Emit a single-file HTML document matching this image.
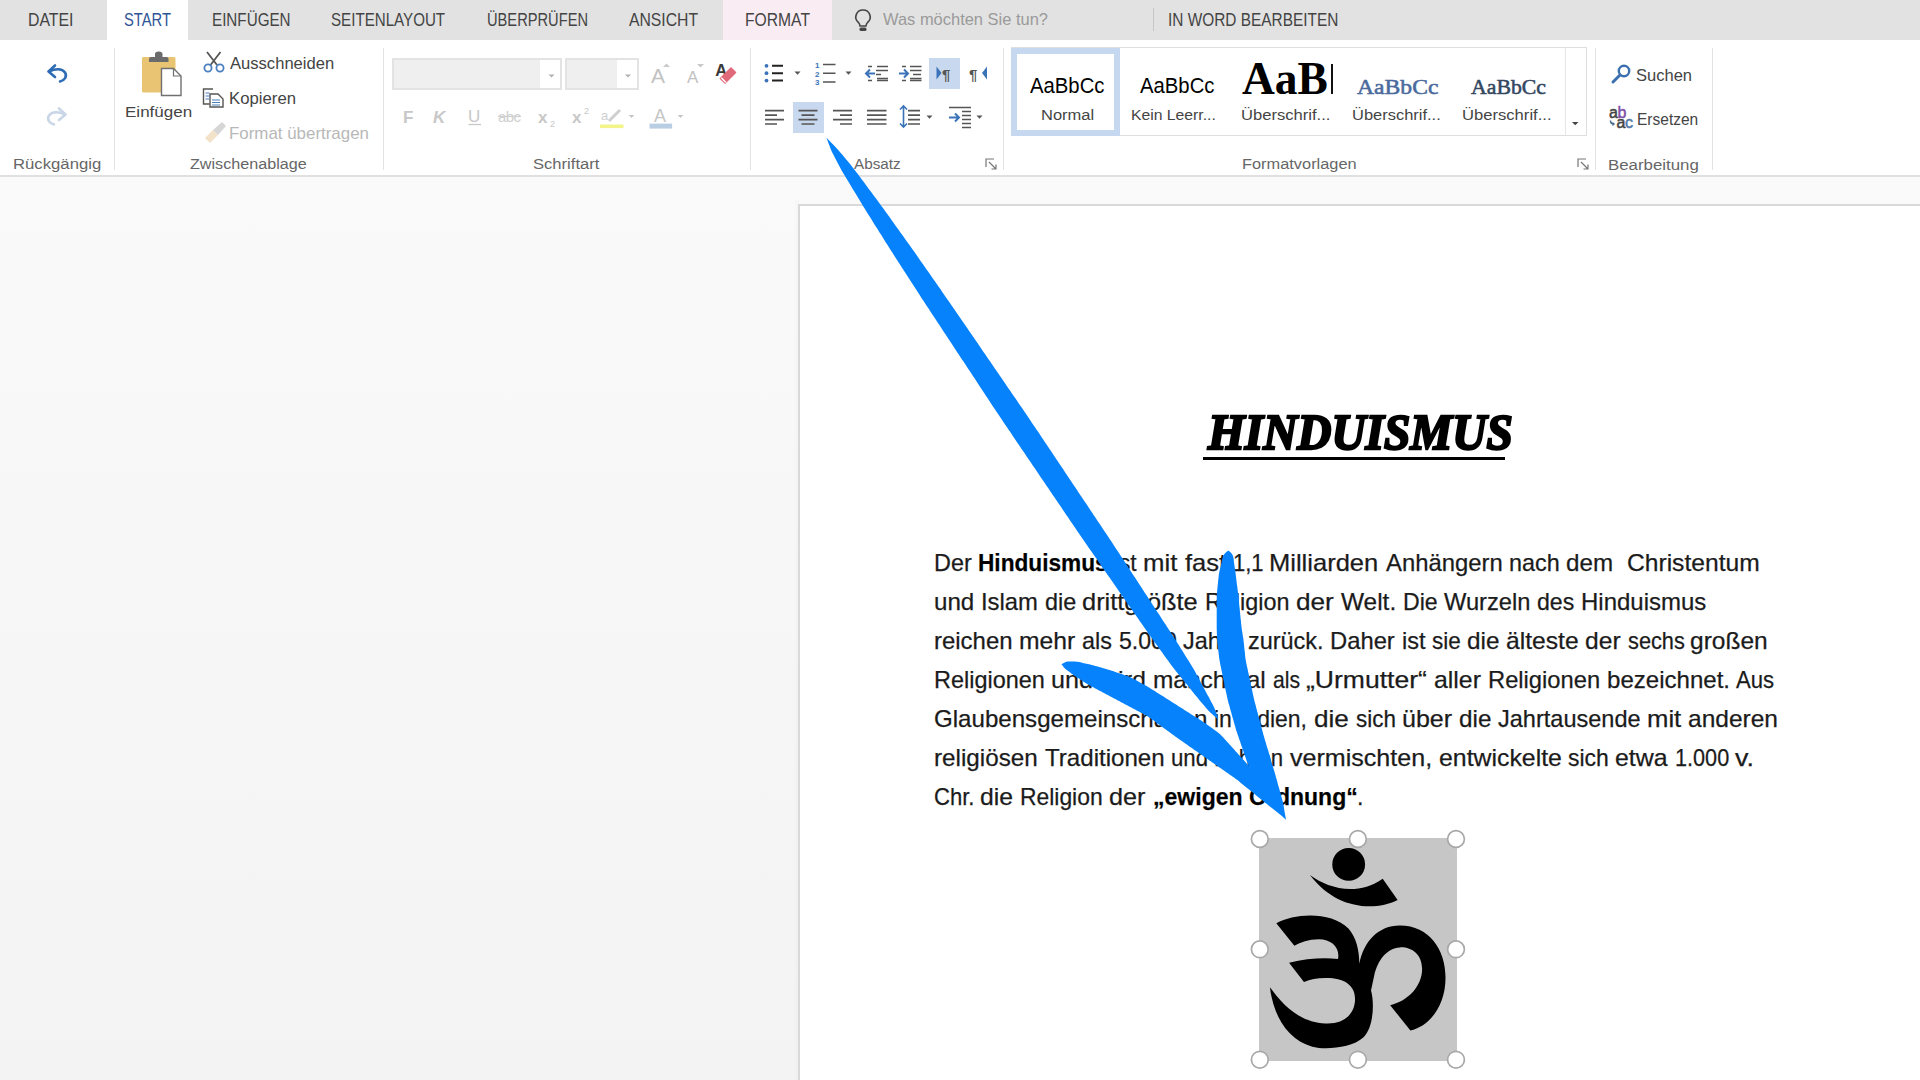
<!DOCTYPE html>
<html><head><meta charset="utf-8">
<style>
html,body{margin:0;padding:0;width:1920px;height:1080px;overflow:hidden;}
body{position:relative;font-family:"Liberation Sans",sans-serif;background:#f6f6f6;}
.tx{position:absolute;white-space:nowrap;line-height:1;transform-origin:0 0;}
.body{color:#1b1b1b;font-family:"Liberation Sans",sans-serif;font-weight:400;-webkit-text-stroke:0.25px #1b1b1b;}
.body b{font-weight:700;color:#000;}
.abs{position:absolute;}
.sep{position:absolute;top:48px;width:1px;height:122px;background:#e3e3e3;}
svg{position:absolute;left:0;top:0;overflow:visible;}
</style></head><body>
<!-- tab bar -->
<div class="abs" style="left:0;top:0;width:1920px;height:40px;background:#e2e2e2"></div>
<div class="abs" style="left:107px;top:0;width:81px;height:40px;background:#ffffff"></div>
<div class="abs" style="left:723px;top:0;width:109px;height:40px;background:#f9edf3"></div>
<div class="abs" style="left:1153px;top:8px;width:1px;height:23px;background:#c6c6c6"></div>
<!-- ribbon -->
<div class="abs" style="left:0;top:40px;width:1920px;height:135px;background:#ffffff"></div>
<div class="abs" style="left:0;top:175px;width:1920px;height:2px;background:#e0e0e0"></div>
<!-- doc area -->
<div class="abs" style="left:0;top:177px;width:1920px;height:903px;background:linear-gradient(#fafafa,#f3f3f3)"></div>
<div class="abs" style="left:793px;top:200px;width:6px;height:880px;background:linear-gradient(90deg,rgba(0,0,0,0),rgba(0,0,0,0.025))"></div>
<div class="abs" style="left:798px;top:204px;width:1130px;height:900px;background:#ffffff;border-left:2px solid #d9d9d9;border-top:2px solid #d9d9d9;box-sizing:border-box"></div>
<!-- separators -->
<div class="sep" style="left:114px"></div>
<div class="sep" style="left:383px"></div>
<div class="sep" style="left:750px"></div>
<div class="sep" style="left:1003px"></div>
<div class="sep" style="left:1595px"></div>
<div class="sep" style="left:1712px"></div>
<!-- font boxes -->
<div class="abs" style="left:392px;top:58px;width:170px;height:32px;background:#efefef;border:2px solid #e3e3e3;box-sizing:border-box"></div>
<div class="abs" style="left:540px;top:60px;width:20px;height:28px;background:#ffffff"></div>
<div class="abs" style="left:565px;top:58px;width:74px;height:32px;background:#efefef;border:2px solid #e3e3e3;box-sizing:border-box"></div>
<div class="abs" style="left:617px;top:60px;width:20px;height:28px;background:#ffffff"></div>
<!-- selected paragraph buttons -->
<div class="abs" style="left:929px;top:58px;width:31px;height:31px;background:#c8d8ef"></div>
<div class="abs" style="left:793px;top:102px;width:31px;height:31px;background:#c8d8ef"></div>
<!-- styles gallery -->
<div class="abs" style="left:1011px;top:47px;width:576px;height:89px;border:1px solid #dedede;box-sizing:border-box;background:#fff"></div>
<div class="abs" style="left:1565px;top:48px;width:1px;height:87px;background:#e6e6e6"></div>
<div class="abs" style="left:1011px;top:48px;width:109px;height:88px;border:6px solid #c6d7f0;box-sizing:border-box;background:#fff"></div>
<div class="abs" style="left:1331px;top:64px;width:2px;height:30px;background:#111"></div>
<!-- title underline -->
<div class="abs" style="left:1203px;top:457px;width:302px;height:3px;background:#000"></div>
<!-- image -->
<div class="abs" style="left:1259px;top:838px;width:198px;height:223px;background:#c6c6c6"></div>

<svg width="1920" height="1080" viewBox="0 0 1920 1080">
 <!-- undo -->
 <g fill="none" stroke="#2f6cb4" stroke-width="2.6" stroke-linecap="round" stroke-linejoin="round">
  <path d="M49 71.5 C55 68.5 62 68 65 72.5 C67.5 76.5 64.5 80.5 60 81.5"/>
  <path d="M55 65.5 L48.5 71.5 L55 77"/>
 </g>
 <g fill="none" stroke="#c9d6e6" stroke-width="2.6" stroke-linecap="round" stroke-linejoin="round">
  <path d="M65 114.5 C59 111.5 52 111 49 115.5 C46.5 119.5 49.5 123.5 54 124.5"/>
  <path d="M59 108.5 L65.5 114.5 L59 120"/>
 </g>
 <!-- paste clipboard -->
 <rect x="142" y="57" width="33.5" height="35.5" rx="1.5" fill="#e9c573"/>
 <path d="M149 62 h19.5 v-3 q0 -2 -2 -2 h-4 v-3 q0 -2.5 -3.7 -2.5 q-3.8 0 -3.8 2.5 v3 h-4 q-2 0 -2 2z" fill="#6b6b6b"/>
 <path d="M161.5 68.5 h12 l7.5 7.5 v19.5 h-19.5z" fill="#fff" stroke="#707070" stroke-width="1.4"/>
 <path d="M173.5 68.5 v7.5 h7.5" fill="none" stroke="#707070" stroke-width="1.2"/>
 <!-- scissors -->
 <g fill="none" stroke-width="1.8">
  <path d="M207 52 L217 65 M220.5 52 L210.5 65" stroke="#555"/>
  <circle cx="208" cy="68" r="3.6" stroke="#4a7fc0"/>
  <circle cx="220" cy="68" r="3.6" stroke="#4a7fc0"/>
 </g>
 <!-- copy -->
 <g fill="none" stroke="#555" stroke-width="1.4">
  <path d="M213 89 h-9.5 v15 h6"/>
  <path d="M210 94 h8 l5 5 v8 h-13z" fill="#fff"/>
 </g>
 <g stroke="#4a7fc0" stroke-width="1.2"><path d="M205.5 93h4 M205.5 96h4 M205.5 99h4 M212 100h8 M212 102.5h8 M212 105h8"/></g>
 <!-- format painter disabled -->
 <path d="M205 138 l8 -8 l5 5 l-8 8z" fill="#f2e3c8"/>
 <path d="M213 130 l9 -8 l4 4 l-8 9z" fill="#d6d6d6"/>
 <!-- dropdown arrows font boxes -->
 <path d="M548.5 74.5 h6 l-3 3z" fill="#b0b0b0"/>
 <path d="M625 74.5 h6 l-3 3z" fill="#b0b0b0"/>
 <!-- grow / shrink font -->
 <text x="651" y="83" font-family="Liberation Sans" font-size="21" fill="#c2c2c2">A</text>
 <path d="M663 67 l3.5 -3.5 l3.5 3.5z" fill="#c9c9c9"/>
 <text x="687" y="83" font-family="Liberation Sans" font-size="17" fill="#c2c2c2">A</text>
 <path d="M697 64 h7 l-3.5 3.5z" fill="#c9c9c9"/>
 <!-- clear formatting -->
 <text x="715.3" y="75.5" font-family="Liberation Sans" font-size="16.5" font-weight="700" fill="#3a3a3a">A</text>
 <path d="M720.5 78.5 L731 68 L735.5 72.5 L725 83 Z" fill="#e06a7a" stroke="#e06a7a" stroke-width="1.6" stroke-linejoin="round"/>
 <path d="M721.3 77.8 l4.6 4.6" stroke="#fff" stroke-width="1.4"/>
 <!-- row2 font -->
 <text x="403" y="123" font-family="Liberation Sans" font-size="17" font-weight="700" fill="#c8c8c8">F</text>
 <text x="433" y="123" font-family="Liberation Sans" font-size="17" font-weight="700" font-style="italic" fill="#c8c8c8">K</text>
 <text x="468" y="122" font-family="Liberation Sans" font-size="17" fill="#c8c8c8">U</text>
 <path d="M468.5 124.5 h12.5" stroke="#c8c8c8" stroke-width="1.3"/>
 <text x="498" y="122" font-family="Liberation Sans" font-size="15" fill="#cfcfcf" textLength="23">abc</text>
 <path d="M498 116.5 h23" stroke="#cfcfcf" stroke-width="1.3"/>
 <text x="538" y="123" font-family="Liberation Sans" font-size="17" font-weight="700" fill="#c8c8c8">x</text>
 <text x="550" y="127" font-family="Liberation Sans" font-size="9" fill="#c8c8c8">2</text>
 <text x="572" y="123" font-family="Liberation Sans" font-size="17" font-weight="700" fill="#c8c8c8">x</text>
 <text x="584" y="114" font-family="Liberation Sans" font-size="9" fill="#c8c8c8">2</text>
 <!-- highlighter -->
 <text x="601" y="120" font-family="Liberation Sans" font-size="13" fill="#cfcfcf">a</text>
 <path d="M609 121 l11 -11" stroke="#cfcfcf" stroke-width="3"/>
 <rect x="600" y="124.5" width="23.5" height="3.6" fill="#f3f58a"/>
 <path d="M628.5 115 h6 l-3 3z" fill="#c8c8c8"/>
 <!-- font color -->
 <text x="654" y="121.5" font-family="Liberation Sans" font-size="18" fill="#c6c6c6">A</text>
 <rect x="649.5" y="123.6" width="22.6" height="5" fill="#b9cde3"/>
 <path d="M677.5 115 h6 l-3 3z" fill="#c8c8c8"/>
 <!-- paragraph: bullets -->
 <g fill="#3b73b9"><circle cx="766.5" cy="65.8" r="1.9"/><circle cx="766.5" cy="73.2" r="1.9"/><circle cx="766.5" cy="80.6" r="1.9"/></g>
 <g stroke="#222" stroke-width="2"><path d="M772 65.8h11 M772 73.2h11 M772 80.6h11"/></g>
 <path d="M794.5 71.5 h6 l-3 3.2z" fill="#555"/>
 <!-- numbering -->
 <g fill="#3b73b9" font-family="Liberation Sans" font-size="8" font-weight="700"><text x="815" y="68">1</text><text x="815" y="76.5">2</text><text x="815" y="85">3</text></g>
 <g stroke="#555" stroke-width="1.6"><path d="M823 64.5h12.5 M823 73.2h12.5 M823 82h12.5"/></g>
 <path d="M845.5 71.5 h6 l-3 3.2z" fill="#555"/>
 <!-- decrease indent -->
 <g stroke="#555" stroke-width="1.6"><path d="M868 66.5h4 M877 66.5h11 M876 70.5h12 M876 74.5h5 M877 78.5h11 M868 80.5h4 M877 80.5h11"/></g>
 <path d="M866 73.5 h9 M870 69.5 l-4 4 l4 4" stroke="#3b73b9" stroke-width="2" fill="none"/>
 <!-- increase indent -->
 <g stroke="#555" stroke-width="1.6"><path d="M902 66.5h4 M910 66.5h11.5 M910 70.5h11.5 M913 74.5h8 M910 78.5h11.5 M902 80.5h4 M910 80.5h11.5"/></g>
 <path d="M899 73.5 h9 M904 69.5 l4 4 l-4 4" stroke="#3b73b9" stroke-width="2" fill="none"/>
 <!-- LTR -->
 <path d="M936.5 66.5 l5 6.5 l-5 6.5z" fill="#3b73b9"/>
 <text x="942" y="80" font-family="Liberation Sans" font-size="15" font-weight="700" fill="#555">¶</text>
 <!-- RTL -->
 <text x="969" y="80" font-family="Liberation Sans" font-size="15" font-weight="700" fill="#555">¶</text>
 <path d="M987 66.5 l-5 6.5 l5 6.5z" fill="#3b73b9"/>
 <!-- align buttons -->
 <g stroke="#555" stroke-width="1.7">
  <path d="M765 110.7h19 M765 115.2h12 M765 119.6h19 M765 124h12"/>
  <path d="M798.5 110.7h19 M801.5 115.2h13 M798.5 119.6h19 M801.5 124h13"/>
  <path d="M833 110.7h19 M840 115.2h12 M833 119.6h19 M840 124h12"/>
  <path d="M867 110.7h19.5 M867 115.2h19.5 M867 119.6h19.5 M867 124h19.5"/>
 </g>
 <!-- line spacing -->
 <g stroke="#555" stroke-width="1.7"><path d="M908 110.7h12 M908 115.2h12 M908 119.6h12 M908 124h12"/></g>
 <path d="M903.5 106 v21 M900 109.5 l3.5 -3.5 l3.5 3.5 M900 123.5 l3.5 3.5 l3.5 -3.5" stroke="#3b73b9" stroke-width="1.6" fill="none"/>
 <path d="M926.5 115.5 h6 l-3 3.2z" fill="#555"/>
 <!-- paragraph indent -->
 <g stroke="#555" stroke-width="1.6"><path d="M949 107.5h22 M962 111.5h9 M962 115.5h9 M962 119.5h9 M962 123.5h9 M962 127.5h9"/></g>
 <path d="M949 117.5 h10 M955 113.5 l4 4 l-4 4" stroke="#3b73b9" stroke-width="2" fill="none"/>
 <path d="M976.5 115.5 h6 l-3 3.2z" fill="#555"/>
 <!-- dialog launchers -->
 <g fill="none" stroke="#777" stroke-width="1.2">
  <path d="M986 167 v-8 h8"/><path d="M989 162 l7 7 M996 164.5 v4.5 h-4.5"/>
  <path d="M1578 167 v-8 h8"/><path d="M1581 162 l7 7 M1588 164.5 v4.5 h-4.5"/>
 </g>
 <!-- gallery dropdown -->
 <path d="M1572 122 h6.5 l-3.25 3.3z" fill="#444"/>
 <!-- search -->
 <circle cx="1624" cy="71" r="5.2" fill="none" stroke="#3b6fae" stroke-width="2.4"/>
 <path d="M1620 75 l-7 7" stroke="#3b6fae" stroke-width="3" stroke-linecap="round"/>
 <!-- replace -->
 <g font-family="Liberation Sans" font-size="16" stroke-width="0.5">
 <text x="1609" y="117.5" fill="#444" stroke="#444">a</text>
 <text x="1617.5" y="117.5" fill="#7f4fa6" stroke="#7f4fa6">b</text>
 <text x="1616.5" y="127.6" fill="#444" stroke="#444">a</text>
 <text x="1625" y="127.6" fill="#4f78a8" stroke="#4f78a8">c</text>
 </g>
 <path d="M1610.5 120.5 q0 3.5 3.5 3.5" stroke="#4a6a8e" stroke-width="1.6" fill="none"/>
 <path d="M1612.5 121.8 l2.6 2.2 l-2.6 2.2z" fill="#4a6a8e"/>
 <!-- lightbulb -->
 <path d="M863 10 a7 7 0 0 0 -4.5 12.5 q1.2 1.2 1.5 3.5 h6 q0.3 -2.3 1.5 -3.5 a7 7 0 0 0 -4.5 -12.5z" fill="none" stroke="#444" stroke-width="1.6"/>
 <rect x="859.5" y="27.5" width="7" height="3.5" rx="1.5" fill="#444"/>
 <!-- om -->
 <g transform="translate(1255 835) scale(0.21288)" fill="#000">
  <circle cx="440" cy="138" r="77"/>
  <path d="M258,188 C340,250 480,290 600,205 L670,305 C560,360 380,350 258,188 Z"/>
  <path d="M100,415 C190,365 360,360 440,440 C475,480 490,540 490,605 C510,500 580,425 680,425 C820,425 895,540 895,670 C895,800 820,900 730,918 L635,800 C720,780 785,710 785,630 C785,560 735,525 680,528 C620,530 575,590 560,660 L545,730 C560,780 560,900 510,950 C460,995 370,1005 300,1000 C180,985 90,880 70,715 C130,800 210,880 330,885 C430,890 470,830 470,770 C470,700 410,670 330,672 C290,672 260,680 230,690 L160,600 C240,580 320,575 390,582 C400,530 360,490 300,490 C250,490 215,505 185,520 Z"/>
 </g>
 <!-- handles -->
 <g fill="#fff" stroke="#a8a8a8" stroke-width="1.7">
  <circle cx="1259.8" cy="839" r="8.4"/><circle cx="1357.9" cy="839" r="8.4"/><circle cx="1456" cy="839" r="8.4"/>
  <circle cx="1259.8" cy="949.3" r="8.4"/><circle cx="1456" cy="949.3" r="8.4"/>
  <circle cx="1259.8" cy="1059.7" r="8.4"/><circle cx="1357.9" cy="1059.7" r="8.4"/><circle cx="1456" cy="1059.7" r="8.4"/>
 </g>
</svg>
<div class='tx' style='left:27.82px;top:10.76px;font-family:"Liberation Sans", sans-serif;font-size:18px;font-weight:400;font-style:normal;color:#444444;transform:scaleX(0.8796)'>DATEI</div>
<div class='tx' style='left:123.88px;top:10.76px;font-family:"Liberation Sans", sans-serif;font-size:18px;font-weight:400;font-style:normal;color:#2f5597;transform:scaleX(0.8196)'>START</div>
<div class='tx' style='left:211.95px;top:10.76px;font-family:"Liberation Sans", sans-serif;font-size:18px;font-weight:400;font-style:normal;color:#444444;transform:scaleX(0.8451)'>EINFÜGEN</div>
<div class='tx' style='left:330.66px;top:10.76px;font-family:"Liberation Sans", sans-serif;font-size:18px;font-weight:400;font-style:normal;color:#444444;transform:scaleX(0.8407)'>SEITENLAYOUT</div>
<div class='tx' style='left:486.89px;top:10.76px;font-family:"Liberation Sans", sans-serif;font-size:18px;font-weight:400;font-style:normal;color:#444444;transform:scaleX(0.8148)'>ÜBERPRÜFEN</div>
<div class='tx' style='left:629.00px;top:10.76px;font-family:"Liberation Sans", sans-serif;font-size:18px;font-weight:400;font-style:normal;color:#444444;transform:scaleX(0.8747)'>ANSICHT</div>
<div class='tx' style='left:744.53px;top:10.76px;font-family:"Liberation Sans", sans-serif;font-size:18px;font-weight:400;font-style:normal;color:#444444;transform:scaleX(0.8703)'>FORMAT</div>
<div class='tx' style='left:882.90px;top:10.91px;font-family:"Liberation Sans", sans-serif;font-size:17px;font-weight:400;font-style:normal;color:#9a9a9a;transform:scaleX(0.9682)'>Was möchten Sie tun?</div>
<div class='tx' style='left:1168.09px;top:10.76px;font-family:"Liberation Sans", sans-serif;font-size:18px;font-weight:400;font-style:normal;color:#444444;transform:scaleX(0.8556)'>IN WORD BEARBEITEN</div>
<div class='tx' style='left:12.52px;top:156.48px;font-family:"Liberation Sans", sans-serif;font-size:15.5px;font-weight:400;font-style:normal;color:#666666;transform:scaleX(1.0775)'>Rückgängig</div>
<div class='tx' style='left:190.00px;top:156.48px;font-family:"Liberation Sans", sans-serif;font-size:15.5px;font-weight:400;font-style:normal;color:#666666;transform:scaleX(1.0420)'>Zwischenablage</div>
<div class='tx' style='left:533.13px;top:156.48px;font-family:"Liberation Sans", sans-serif;font-size:15.5px;font-weight:400;font-style:normal;color:#666666;transform:scaleX(1.0705)'>Schriftart</div>
<div class='tx' style='left:854.30px;top:156.28px;font-family:"Liberation Sans", sans-serif;font-size:15.5px;font-weight:400;font-style:normal;color:#666666;transform:scaleX(0.9851)'>Absatz</div>
<div class='tx' style='left:1241.64px;top:156.28px;font-family:"Liberation Sans", sans-serif;font-size:15.5px;font-weight:400;font-style:normal;color:#666666;transform:scaleX(1.0561)'>Formatvorlagen</div>
<div class='tx' style='left:1608.41px;top:156.58px;font-family:"Liberation Sans", sans-serif;font-size:15.5px;font-weight:400;font-style:normal;color:#666666;transform:scaleX(1.0866)'>Bearbeitung</div>
<div class='tx' style='left:124.60px;top:103.98px;font-family:"Liberation Sans", sans-serif;font-size:15.5px;font-weight:400;font-style:normal;color:#444444;transform:scaleX(1.0983)'>Einfügen</div>
<div class='tx' style='left:230.20px;top:55.21px;font-family:"Liberation Sans", sans-serif;font-size:17px;font-weight:400;font-style:normal;color:#444444;transform:scaleX(0.9755)'>Ausschneiden</div>
<div class='tx' style='left:229.22px;top:89.81px;font-family:"Liberation Sans", sans-serif;font-size:17px;font-weight:400;font-style:normal;color:#444444;transform:scaleX(0.9848)'>Kopieren</div>
<div class='tx' style='left:229.41px;top:124.81px;font-family:"Liberation Sans", sans-serif;font-size:17px;font-weight:400;font-style:normal;color:#b8b8b8;transform:scaleX(0.9942)'>Format übertragen</div>
<div class='tx' style='left:1030.00px;top:76.00px;font-family:"Liberation Sans", sans-serif;font-size:21.5px;font-weight:400;font-style:normal;color:#000000;transform:scaleX(0.9436)'>AaBbCc</div>
<div class='tx' style='left:1040.64px;top:106.78px;font-family:"Liberation Sans", sans-serif;font-size:15.5px;font-weight:400;font-style:normal;color:#444444;transform:scaleX(1.0646)'>Normal</div>
<div class='tx' style='left:1140.10px;top:76.00px;font-family:"Liberation Sans", sans-serif;font-size:21.5px;font-weight:400;font-style:normal;color:#000000;transform:scaleX(0.9436)'>AaBbCc</div>
<div class='tx' style='left:1130.99px;top:106.78px;font-family:"Liberation Sans", sans-serif;font-size:15.5px;font-weight:400;font-style:normal;color:#444444;transform:scaleX(1.0148)'>Kein Leerr...</div>
<div class='abs' style='left:0;top:0;width:1333px;height:200px;overflow:hidden'><div class='tx' style='left:1242.30px;top:55.68px;font-family:"Liberation Serif", serif;font-size:46px;font-weight:700;font-style:normal;color:#000000;transform:scaleX(0.9884)'>AaB</div></div>
<div class='tx' style='left:1241.23px;top:106.78px;font-family:"Liberation Sans", sans-serif;font-size:15.5px;font-weight:400;font-style:normal;color:#444444;transform:scaleX(1.0704)'>Überschrif...</div>
<div class='tx' style='left:1357.40px;top:75.78px;font-family:"Liberation Serif", serif;font-size:22px;font-weight:400;font-style:normal;color:#4a6a9c;-webkit-text-stroke:0.55px #4a6a9c;transform:scaleX(1.0747)'>AaBbCc</div>
<div class='tx' style='left:1352.34px;top:106.78px;font-family:"Liberation Sans", sans-serif;font-size:15.5px;font-weight:400;font-style:normal;color:#444444;transform:scaleX(1.0617)'>Überschrif...</div>
<div class='tx' style='left:1471.30px;top:76.08px;font-family:"Liberation Serif", serif;font-size:22px;font-weight:400;font-style:normal;color:#34475f;-webkit-text-stroke:0.55px #34475f;transform:scaleX(0.9893)'>AaBbCc</div>
<div class='tx' style='left:1462.33px;top:107.08px;font-family:"Liberation Sans", sans-serif;font-size:15.5px;font-weight:400;font-style:normal;color:#444444;transform:scaleX(1.0716)'>Überschrif...</div>
<div class='tx' style='left:1636.23px;top:67.01px;font-family:"Liberation Sans", sans-serif;font-size:17px;font-weight:400;font-style:normal;color:#444444;transform:scaleX(0.9714)'>Suchen</div>
<div class='tx' style='left:1636.79px;top:110.81px;font-family:"Liberation Sans", sans-serif;font-size:17px;font-weight:400;font-style:normal;color:#444444;transform:scaleX(0.9123)'>Ersetzen</div>
<div class='tx' style='left:1207.50px;top:407.41px;font-family:"Liberation Serif", serif;font-size:50.5px;font-weight:700;font-style:italic;color:#000000;-webkit-text-stroke:2.4px #000;transform:scaleX(0.9359)'>HINDUISMUS</div>
<div class='tx body' style='left:934.03px;top:550.68px;font-size:24px;transform:scaleX(0.9749)'>Der</div>
<div class='tx body' style='left:978.26px;top:550.68px;font-size:24px;font-weight:700;color:#000;transform:scaleX(0.9440)'>Hinduismus</div>
<div class='tx body' style='left:1114.21px;top:550.68px;font-size:24px;transform:scaleX(0.9440)'>ist</div>
<div class='tx body' style='left:1143.03px;top:550.68px;font-size:24px;transform:scaleX(1.0728)'>mit</div>
<div class='tx body' style='left:1184.50px;top:550.68px;font-size:24px;transform:scaleX(1.0636)'>fast</div>
<div class='tx body' style='left:1232.88px;top:550.68px;font-size:24px;transform:scaleX(0.9168)'>1,1</div>
<div class='tx body' style='left:1269.44px;top:550.68px;font-size:24px;transform:scaleX(1.0639)'>Milliarden</div>
<div class='tx body' style='left:1385.80px;top:550.68px;font-size:24px;transform:scaleX(0.9936)'>Anhängern</div>
<div class='tx body' style='left:1509.13px;top:550.68px;font-size:24px;transform:scaleX(0.9726)'>nach</div>
<div class='tx body' style='left:1566.19px;top:550.68px;font-size:24px;transform:scaleX(1.0079)'>dem </div>
<div class='tx body' style='left:1626.67px;top:550.68px;font-size:24px;transform:scaleX(1.0253)'>Christentum</div>
<div class='tx body' style='left:933.99px;top:589.58px;font-size:24px;transform:scaleX(1.0061)'>und</div>
<div class='tx body' style='left:981.01px;top:589.58px;font-size:24px;transform:scaleX(0.9935)'>Islam</div>
<div class='tx body' style='left:1044.63px;top:589.58px;font-size:24px;transform:scaleX(0.9743)'>die</div>
<div class='tx body' style='left:1082.24px;top:589.58px;font-size:24px;transform:scaleX(1.0583)'>drittgrößte</div>
<div class='tx body' style='left:1205.13px;top:589.58px;font-size:24px;transform:scaleX(0.9734)'>Religion</div>
<div class='tx body' style='left:1295.91px;top:589.58px;font-size:24px;transform:scaleX(1.0903)'>der</div>
<div class='tx body' style='left:1341.00px;top:589.58px;font-size:24px;transform:scaleX(1.0177)'>Welt.</div>
<div class='tx body' style='left:1403.04px;top:589.58px;font-size:24px;transform:scaleX(0.9621)'>Die</div>
<div class='tx body' style='left:1444.10px;top:589.58px;font-size:24px;transform:scaleX(0.9868)'>Wurzeln</div>
<div class='tx body' style='left:1537.14px;top:589.58px;font-size:24px;transform:scaleX(0.9633)'>des</div>
<div class='tx body' style='left:1580.80px;top:589.58px;font-size:24px;transform:scaleX(0.9994)'>Hinduismus</div>
<div class='tx body' style='left:934.00px;top:628.58px;font-size:24px;transform:scaleX(0.9979)'>reichen</div>
<div class='tx body' style='left:1019.17px;top:628.58px;font-size:24px;transform:scaleX(1.0286)'>mehr</div>
<div class='tx body' style='left:1082.33px;top:628.58px;font-size:24px;transform:scaleX(0.9739)'>als</div>
<div class='tx body' style='left:1118.70px;top:628.58px;font-size:24px;transform:scaleX(0.9621)'>5.000</div>
<div class='tx body' style='left:1182.90px;top:628.58px;font-size:24px;transform:scaleX(0.9790)'>Jahre</div>
<div class='tx body' style='left:1248.20px;top:628.58px;font-size:24px;transform:scaleX(0.9762)'>zurück.</div>
<div class='tx body' style='left:1330.21px;top:628.58px;font-size:24px;transform:scaleX(0.9912)'>Daher</div>
<div class='tx body' style='left:1401.62px;top:628.58px;font-size:24px;transform:scaleX(0.9809)'>ist</div>
<div class='tx body' style='left:1431.70px;top:628.58px;font-size:24px;transform:scaleX(0.9362)'>sie</div>
<div class='tx body' style='left:1466.59px;top:628.58px;font-size:24px;transform:scaleX(1.0130)'>die</div>
<div class='tx body' style='left:1505.77px;top:628.58px;font-size:24px;transform:scaleX(1.0274)'>älteste</div>
<div class='tx body' style='left:1585.27px;top:628.58px;font-size:24px;transform:scaleX(1.0259)'>der</div>
<div class='tx body' style='left:1627.70px;top:628.58px;font-size:24px;transform:scaleX(0.9067)'>sechs</div>
<div class='tx body' style='left:1690.48px;top:628.58px;font-size:24px;transform:scaleX(1.0218)'>großen</div>
<div class='tx body' style='left:934.02px;top:667.68px;font-size:24px;transform:scaleX(0.9768)'>Religionen</div>
<div class='tx body' style='left:1051.25px;top:667.68px;font-size:24px;transform:scaleX(1.0454)'>und</div>
<div class='tx body' style='left:1100.08px;top:667.68px;font-size:24px;transform:scaleX(1.0454)'>wird</div>
<div class='tx body' style='left:1153.08px;top:667.68px;font-size:24px;transform:scaleX(1.0181)'>manchmal</div>
<div class='tx body' style='left:1272.72px;top:667.68px;font-size:24px;transform:scaleX(0.8831)'>als</div>
<div class='tx body' style='left:1305.70px;top:667.68px;font-size:24px;transform:scaleX(1.1061)'>„Urmutter“</div>
<div class='tx body' style='left:1434.07px;top:667.68px;font-size:24px;transform:scaleX(1.0342)'>aller</div>
<div class='tx body' style='left:1487.91px;top:667.68px;font-size:24px;transform:scaleX(0.9885)'>Religionen</div>
<div class='tx body' style='left:1606.60px;top:667.68px;font-size:24px;transform:scaleX(1.0022)'>bezeichnet.</div>
<div class='tx body' style='left:1736.30px;top:667.68px;font-size:24px;transform:scaleX(0.9213)'>Aus</div>
<div class='tx body' style='left:934.00px;top:706.78px;font-size:24px;transform:scaleX(1.0041)'>Glaubensgemeinschaften</div>
<div class='tx body' style='left:1214.04px;top:706.78px;font-size:24px;transform:scaleX(0.9570)'>in</div>
<div class='tx body' style='left:1238.30px;top:706.78px;font-size:24px;transform:scaleX(0.9570)'>Indien,</div>
<div class='tx body' style='left:1313.51px;top:706.78px;font-size:24px;transform:scaleX(1.0877)'>die</div>
<div class='tx body' style='left:1355.60px;top:706.78px;font-size:24px;transform:scaleX(0.9335)'>sich</div>
<div class='tx body' style='left:1401.56px;top:706.78px;font-size:24px;transform:scaleX(1.0438)'>über</div>
<div class='tx body' style='left:1458.69px;top:706.78px;font-size:24px;transform:scaleX(1.0107)'>die</div>
<div class='tx body' style='left:1497.80px;top:706.78px;font-size:24px;transform:scaleX(0.9803)'>Jahrtausende</div>
<div class='tx body' style='left:1646.83px;top:706.78px;font-size:24px;transform:scaleX(1.0709)'>mit</div>
<div class='tx body' style='left:1688.28px;top:706.78px;font-size:24px;transform:scaleX(1.0218)'>anderen</div>
<div class='tx body' style='left:933.99px;top:745.88px;font-size:24px;transform:scaleX(1.0102)'>religiösen</div>
<div class='tx body' style='left:1044.50px;top:745.88px;font-size:24px;transform:scaleX(1.0036)'>Traditionen</div>
<div class='tx body' style='left:1170.87px;top:745.88px;font-size:24px;transform:scaleX(0.9260)'>und</div>
<div class='tx body' style='left:1214.13px;top:745.88px;font-size:24px;transform:scaleX(0.9260)'>Lehren</div>
<div class='tx body' style='left:1289.50px;top:745.88px;font-size:24px;transform:scaleX(1.0445)'>vermischten,</div>
<div class='tx body' style='left:1438.56px;top:745.88px;font-size:24px;transform:scaleX(1.0354)'>entwickelte</div>
<div class='tx body' style='left:1568.40px;top:745.88px;font-size:24px;transform:scaleX(0.9554)'>sich</div>
<div class='tx body' style='left:1615.46px;top:745.88px;font-size:24px;transform:scaleX(1.0355)'>etwa</div>
<div class='tx body' style='left:1675.00px;top:745.88px;font-size:24px;transform:scaleX(0.9022)'>1.000</div>
<div class='tx body' style='left:1735.20px;top:745.88px;font-size:24px;transform:scaleX(1.1200)'>v.</div>
<div class='tx body' style='left:933.68px;top:785.18px;font-size:24px;transform:scaleX(0.9194)'>Chr.</div>
<div class='tx body' style='left:980.17px;top:785.18px;font-size:24px;transform:scaleX(1.0311)'>die</div>
<div class='tx body' style='left:1020.15px;top:785.18px;font-size:24px;transform:scaleX(0.9530)'>Religion</div>
<div class='tx body' style='left:1109.05px;top:785.18px;font-size:24px;transform:scaleX(1.0494)'>der</div>
<div class='tx body' style='left:1152.54px;top:785.18px;font-size:24px;font-weight:700;color:#000;transform:scaleX(0.9598)'>„ewigen</div>
<div class='tx body' style='left:1248.54px;top:785.18px;font-size:24px;font-weight:700;color:#000;transform:scaleX(0.9598)'>Ordnung“</div>
<div class='tx body' style='left:1357.30px;top:785.18px;font-size:24px;transform:scaleX(0.9598)'>.</div>
<svg width="1920" height="1080" viewBox="0 0 1920 1080">
 <g fill="#0582fc">
<path d='M826.5,137.8 L827.4,140.2 L828.3,142.7 L829.2,145.1 L830.1,147.5 L831.1,150.0 L832.2,152.4 L833.5,154.8 L834.7,157.3 L836.0,159.7 L837.2,162.1 L838.5,164.6 L839.8,167.0 L841.1,169.4 L842.5,171.9 L843.9,174.3 L845.4,176.7 L846.9,179.2 L848.3,181.6 L849.8,184.0 L851.3,186.5 L852.7,188.9 L854.2,191.3 L855.7,193.8 L857.2,196.2 L858.6,198.6 L860.1,201.0 L861.6,203.5 L863.0,205.9 L864.5,208.3 L866.0,210.8 L867.5,213.2 L869.0,215.6 L870.6,218.1 L872.1,220.5 L873.6,222.9 L875.1,225.4 L876.7,227.8 L878.2,230.2 L879.7,232.7 L881.3,235.1 L882.8,237.5 L884.3,240.0 L885.8,242.4 L887.4,244.8 L888.9,247.3 L890.4,249.7 L892.0,252.1 L893.5,254.6 L895.1,257.0 L896.7,259.4 L898.3,261.9 L899.8,264.3 L901.4,266.7 L903.0,269.2 L904.5,271.6 L906.1,274.0 L907.7,276.5 L909.3,278.9 L910.8,281.3 L912.4,283.8 L914.0,286.2 L915.5,288.6 L917.1,291.1 L918.7,293.5 L920.3,295.9 L921.8,298.4 L923.4,300.8 L925.0,303.2 L926.6,305.7 L928.2,308.1 L929.8,310.5 L931.4,312.9 L933.0,315.4 L934.6,317.8 L936.2,320.2 L937.8,322.7 L939.4,325.1 L941.0,327.5 L942.6,330.0 L944.2,332.4 L945.8,334.8 L947.4,337.3 L949.0,339.7 L950.6,342.1 L952.2,344.6 L953.8,347.0 L955.4,349.4 L957.0,351.9 L958.6,354.3 L960.2,356.7 L961.8,359.2 L963.5,361.6 L965.1,364.0 L966.7,366.5 L968.3,368.9 L969.9,371.3 L971.5,373.8 L973.1,376.2 L974.7,378.6 L976.3,381.1 L977.9,383.5 L979.5,385.9 L981.1,388.4 L982.7,390.8 L984.3,393.2 L985.9,395.7 L987.5,398.1 L989.1,400.5 L990.7,403.0 L992.3,405.4 L993.9,407.8 L995.5,410.3 L997.2,412.7 L998.8,415.1 L1000.4,417.6 L1002.1,420.0 L1003.7,422.4 L1005.4,424.9 L1007.0,427.3 L1008.6,429.7 L1010.3,432.1 L1011.9,434.6 L1013.5,437.0 L1015.2,439.4 L1016.8,441.9 L1018.5,444.3 L1020.1,446.7 L1021.8,449.2 L1023.4,451.6 L1025.1,454.0 L1026.7,456.5 L1028.4,458.9 L1030.0,461.3 L1031.7,463.8 L1033.3,466.2 L1035.0,468.6 L1036.6,471.1 L1038.3,473.5 L1039.9,475.9 L1041.6,478.4 L1043.2,480.8 L1044.9,483.2 L1046.5,485.7 L1048.2,488.1 L1049.8,490.5 L1051.5,493.0 L1053.1,495.4 L1054.8,497.8 L1056.4,500.3 L1058.1,502.7 L1059.7,505.1 L1061.4,507.6 L1063.0,510.0 L1064.7,512.4 L1066.3,514.9 L1068.0,517.3 L1069.6,519.7 L1071.3,522.2 L1072.9,524.6 L1074.6,527.0 L1076.2,529.5 L1077.9,531.9 L1079.5,534.3 L1081.2,536.8 L1082.9,539.2 L1084.5,541.6 L1086.2,544.1 L1087.9,546.5 L1089.6,548.9 L1091.3,551.3 L1093.0,553.8 L1094.7,556.2 L1096.4,558.6 L1098.0,561.1 L1099.7,563.5 L1101.4,565.9 L1103.1,568.4 L1104.8,570.8 L1106.5,573.2 L1108.2,575.7 L1109.9,578.1 L1111.6,580.5 L1113.3,583.0 L1115.0,585.4 L1116.6,587.8 L1118.3,590.3 L1120.0,592.7 L1121.7,595.1 L1123.4,597.6 L1125.1,600.0 L1126.8,602.4 L1128.5,604.9 L1130.2,607.3 L1131.9,609.7 L1133.6,612.2 L1135.3,614.6 L1137.0,617.0 L1138.7,619.5 L1140.4,621.9 L1142.1,624.3 L1143.8,626.8 L1145.5,629.2 L1147.2,631.6 L1148.9,634.1 L1150.6,636.5 L1152.3,638.9 L1154.1,641.4 L1155.8,643.8 L1157.6,646.2 L1159.4,648.7 L1161.1,651.1 L1162.9,653.5 L1164.6,656.0 L1166.4,658.4 L1168.2,660.8 L1169.9,663.2 L1171.7,665.7 L1173.5,668.1 L1175.4,670.5 L1177.4,673.0 L1179.3,675.4 L1181.3,677.8 L1183.3,680.3 L1185.3,682.7 L1187.3,685.1 L1189.3,687.6 L1191.2,690.0 L1193.2,692.4 L1195.2,694.9 L1197.2,697.3 L1199.1,699.7 L1201.2,702.2 L1203.2,704.6 L1205.3,707.0 L1207.4,709.5 L1209.8,711.9 L1212.3,714.3 L1215.0,716.8 L1217.8,719.2 L1217.8,719.2 L1217.3,716.8 L1216.7,714.3 L1216.0,711.9 L1215.0,709.5 L1213.9,707.0 L1212.7,704.6 L1211.4,702.2 L1210.1,699.7 L1208.9,697.3 L1207.5,694.9 L1206.2,692.4 L1204.9,690.0 L1203.6,687.6 L1202.3,685.1 L1201.0,682.7 L1199.7,680.3 L1198.4,677.8 L1197.1,675.4 L1195.8,673.0 L1194.5,670.5 L1193.0,668.1 L1191.6,665.7 L1190.1,663.2 L1188.6,660.8 L1187.1,658.4 L1185.5,656.0 L1184.0,653.5 L1182.5,651.1 L1181.0,648.7 L1179.5,646.2 L1177.9,643.8 L1176.4,641.4 L1174.9,638.9 L1173.3,636.5 L1171.7,634.1 L1170.1,631.6 L1168.6,629.2 L1167.0,626.8 L1165.4,624.3 L1163.8,621.9 L1162.2,619.5 L1160.7,617.0 L1159.1,614.6 L1157.5,612.2 L1155.9,609.7 L1154.3,607.3 L1152.8,604.9 L1151.2,602.4 L1149.6,600.0 L1148.0,597.6 L1146.4,595.1 L1144.8,592.7 L1143.2,590.3 L1141.6,587.8 L1140.1,585.4 L1138.5,583.0 L1136.9,580.5 L1135.3,578.1 L1133.7,575.7 L1132.1,573.2 L1130.5,570.8 L1128.9,568.4 L1127.3,565.9 L1125.8,563.5 L1124.2,561.1 L1122.6,558.6 L1121.0,556.2 L1119.4,553.8 L1117.8,551.3 L1116.2,548.9 L1114.6,546.5 L1113.0,544.1 L1111.4,541.6 L1109.8,539.2 L1108.2,536.8 L1106.6,534.3 L1105.0,531.9 L1103.3,529.5 L1101.7,527.0 L1100.1,524.6 L1098.5,522.2 L1096.8,519.7 L1095.2,517.3 L1093.6,514.9 L1092.0,512.4 L1090.3,510.0 L1088.7,507.6 L1087.1,505.1 L1085.5,502.7 L1083.8,500.3 L1082.2,497.8 L1080.6,495.4 L1078.9,493.0 L1077.3,490.5 L1075.7,488.1 L1074.1,485.7 L1072.4,483.2 L1070.8,480.8 L1069.2,478.4 L1067.6,475.9 L1065.9,473.5 L1064.3,471.1 L1062.7,468.6 L1061.1,466.2 L1059.4,463.8 L1057.8,461.3 L1056.2,458.9 L1054.6,456.5 L1052.9,454.0 L1051.3,451.6 L1049.7,449.2 L1048.1,446.7 L1046.4,444.3 L1044.8,441.9 L1043.2,439.4 L1041.5,437.0 L1039.9,434.6 L1038.3,432.1 L1036.6,429.7 L1035.0,427.3 L1033.4,424.9 L1031.7,422.4 L1030.1,420.0 L1028.4,417.6 L1026.8,415.1 L1025.2,412.7 L1023.5,410.3 L1021.9,407.8 L1020.2,405.4 L1018.5,403.0 L1016.9,400.5 L1015.2,398.1 L1013.5,395.7 L1011.8,393.2 L1010.2,390.8 L1008.5,388.4 L1006.8,385.9 L1005.2,383.5 L1003.5,381.1 L1001.8,378.6 L1000.2,376.2 L998.5,373.8 L996.8,371.3 L995.2,368.9 L993.5,366.5 L991.8,364.0 L990.2,361.6 L988.5,359.2 L986.8,356.7 L985.2,354.3 L983.5,351.9 L981.8,349.4 L980.2,347.0 L978.5,344.6 L976.8,342.1 L975.2,339.7 L973.5,337.3 L971.8,334.8 L970.2,332.4 L968.5,330.0 L966.8,327.5 L965.1,325.1 L963.5,322.7 L961.8,320.2 L960.1,317.8 L958.5,315.4 L956.8,312.9 L955.1,310.5 L953.4,308.1 L951.8,305.7 L950.1,303.2 L948.4,300.8 L946.7,298.4 L945.0,295.9 L943.3,293.5 L941.6,291.1 L940.0,288.6 L938.3,286.2 L936.6,283.8 L934.9,281.3 L933.2,278.9 L931.5,276.5 L929.8,274.0 L928.1,271.6 L926.4,269.2 L924.7,266.7 L923.0,264.3 L921.3,261.9 L919.6,259.4 L917.9,257.0 L916.2,254.6 L914.5,252.1 L912.8,249.7 L911.0,247.3 L909.3,244.8 L907.6,242.4 L905.8,240.0 L904.1,237.5 L902.3,235.1 L900.6,232.7 L898.9,230.2 L897.1,227.8 L895.4,225.4 L893.7,222.9 L891.9,220.5 L890.2,218.1 L888.4,215.6 L886.7,213.2 L884.9,210.8 L883.2,208.3 L881.4,205.9 L879.6,203.5 L877.8,201.0 L876.0,198.6 L874.2,196.2 L872.4,193.8 L870.6,191.3 L868.8,188.9 L867.0,186.5 L865.2,184.0 L863.4,181.6 L861.6,179.2 L859.8,176.7 L858.0,174.3 L856.2,171.9 L854.3,169.4 L852.3,167.0 L850.4,164.6 L848.4,162.1 L846.4,159.7 L844.4,157.3 L842.4,154.8 L840.3,152.4 L838.2,150.0 L835.9,147.5 L833.6,145.1 L831.3,142.7 L828.9,140.2 L826.5,137.8Z'/>
<path d='M1228.3,550.6 L1226.1,552.3 L1224.4,554.0 L1223.3,555.7 L1222.7,557.4 L1222.2,559.1 L1221.9,560.8 L1221.6,562.4 L1221.2,564.1 L1220.8,565.8 L1220.4,567.5 L1219.9,569.2 L1219.5,570.9 L1219.2,572.6 L1218.9,574.3 L1218.7,576.0 L1218.5,577.7 L1218.3,579.4 L1218.1,581.1 L1218.0,582.8 L1217.8,584.4 L1217.6,586.1 L1217.5,587.8 L1217.3,589.5 L1217.1,591.2 L1217.0,592.9 L1216.8,594.6 L1216.8,596.3 L1216.7,598.0 L1216.7,599.7 L1216.7,601.4 L1216.7,603.1 L1216.7,604.8 L1216.7,606.5 L1216.7,608.1 L1216.7,609.8 L1216.7,611.5 L1216.7,613.2 L1216.7,614.9 L1216.7,616.6 L1216.7,618.3 L1216.7,620.0 L1216.7,621.7 L1216.7,623.4 L1216.7,625.1 L1216.7,626.8 L1216.7,628.5 L1216.8,630.1 L1216.8,631.8 L1216.9,633.5 L1216.9,635.2 L1217.0,636.9 L1217.1,638.6 L1217.2,640.3 L1217.3,642.0 L1217.5,643.7 L1217.7,645.4 L1217.9,647.1 L1218.1,648.8 L1218.3,650.5 L1218.5,652.1 L1218.7,653.8 L1218.9,655.5 L1219.1,657.2 L1219.3,658.9 L1219.6,660.6 L1219.9,662.3 L1220.2,664.0 L1220.6,665.7 L1220.9,667.4 L1221.3,669.1 L1221.6,670.8 L1222.0,672.5 L1222.3,674.1 L1222.7,675.8 L1223.0,677.5 L1223.4,679.2 L1223.7,680.9 L1224.1,682.6 L1224.4,684.3 L1224.8,686.0 L1225.1,687.7 L1225.5,689.4 L1225.8,691.1 L1226.2,692.8 L1226.6,694.5 L1226.9,696.2 L1227.3,697.8 L1227.6,699.5 L1228.1,701.2 L1228.5,702.9 L1229.0,704.6 L1229.5,706.3 L1229.9,708.0 L1230.4,709.7 L1230.9,711.4 L1231.4,713.1 L1231.8,714.8 L1232.3,716.5 L1232.8,718.2 L1233.3,719.8 L1233.7,721.5 L1234.2,723.2 L1234.7,724.9 L1235.2,726.6 L1235.6,728.3 L1236.1,730.0 L1236.7,731.7 L1237.3,733.4 L1237.8,735.1 L1238.4,736.8 L1239.0,738.5 L1239.6,740.2 L1240.2,741.8 L1240.7,743.5 L1241.3,745.2 L1241.9,746.9 L1242.5,748.6 L1243.1,750.3 L1243.6,752.0 L1244.2,753.7 L1244.8,755.4 L1245.4,757.1 L1246.0,758.8 L1246.5,760.5 L1247.1,762.2 L1247.8,763.8 L1248.5,765.5 L1249.4,767.2 L1250.3,768.9 L1251.3,770.6 L1252.3,772.3 L1253.2,774.0 L1254.2,775.7 L1255.1,777.4 L1256.1,779.1 L1257.1,780.8 L1258.0,782.5 L1259.0,784.2 L1260.0,785.9 L1260.9,787.5 L1261.9,789.2 L1262.8,790.9 L1263.8,792.6 L1264.8,794.3 L1265.7,796.0 L1266.7,797.7 L1267.9,799.4 L1269.1,801.1 L1270.6,802.8 L1272.1,804.5 L1273.6,806.2 L1275.2,807.9 L1276.7,809.5 L1278.3,811.2 L1279.8,812.9 L1281.4,814.6 L1282.9,816.3 L1284.5,818.0 L1286.0,819.7 L1286.0,819.7 L1285.7,818.0 L1285.4,816.3 L1285.1,814.6 L1284.8,812.9 L1284.5,811.2 L1284.2,809.5 L1284.0,807.9 L1283.7,806.2 L1283.4,804.5 L1283.0,802.8 L1282.6,801.1 L1282.2,799.4 L1281.7,797.7 L1281.2,796.0 L1280.8,794.3 L1280.3,792.6 L1279.8,790.9 L1279.4,789.2 L1278.9,787.5 L1278.4,785.9 L1277.9,784.2 L1277.5,782.5 L1277.0,780.8 L1276.5,779.1 L1276.0,777.4 L1275.6,775.7 L1275.1,774.0 L1274.6,772.3 L1274.1,770.6 L1273.6,768.9 L1273.1,767.2 L1272.6,765.5 L1272.1,763.8 L1271.6,762.2 L1271.1,760.5 L1270.6,758.8 L1270.1,757.1 L1269.6,755.4 L1269.1,753.7 L1268.6,752.0 L1268.1,750.3 L1267.5,748.6 L1267.0,746.9 L1266.5,745.2 L1266.0,743.5 L1265.5,741.8 L1265.0,740.2 L1264.5,738.5 L1264.0,736.8 L1263.5,735.1 L1263.1,733.4 L1262.6,731.7 L1262.2,730.0 L1261.7,728.3 L1261.3,726.6 L1260.8,724.9 L1260.4,723.2 L1259.9,721.5 L1259.5,719.8 L1259.0,718.2 L1258.6,716.5 L1258.1,714.8 L1257.7,713.1 L1257.2,711.4 L1256.8,709.7 L1256.3,708.0 L1255.9,706.3 L1255.4,704.6 L1255.0,702.9 L1254.5,701.2 L1254.1,699.5 L1253.7,697.8 L1253.4,696.2 L1253.0,694.5 L1252.6,692.8 L1252.3,691.1 L1251.9,689.4 L1251.6,687.7 L1251.2,686.0 L1250.8,684.3 L1250.5,682.6 L1250.1,680.9 L1249.7,679.2 L1249.4,677.5 L1249.0,675.8 L1248.6,674.1 L1248.3,672.5 L1247.9,670.8 L1247.6,669.1 L1247.2,667.4 L1246.8,665.7 L1246.5,664.0 L1246.1,662.3 L1245.8,660.6 L1245.5,658.9 L1245.3,657.2 L1245.1,655.5 L1245.0,653.8 L1244.8,652.1 L1244.6,650.5 L1244.4,648.8 L1244.2,647.1 L1244.1,645.4 L1243.9,643.7 L1243.7,642.0 L1243.5,640.3 L1243.3,638.6 L1243.0,636.9 L1242.7,635.2 L1242.5,633.5 L1242.2,631.8 L1241.9,630.1 L1241.7,628.5 L1241.5,626.8 L1241.3,625.1 L1241.1,623.4 L1241.0,621.7 L1240.8,620.0 L1240.6,618.3 L1240.4,616.6 L1240.3,614.9 L1240.1,613.2 L1239.9,611.5 L1239.8,609.8 L1239.6,608.1 L1239.4,606.5 L1239.2,604.8 L1239.1,603.1 L1238.9,601.4 L1238.7,599.7 L1238.5,598.0 L1238.4,596.3 L1238.2,594.6 L1238.0,592.9 L1237.8,591.2 L1237.6,589.5 L1237.4,587.8 L1237.2,586.1 L1236.9,584.4 L1236.7,582.8 L1236.5,581.1 L1236.3,579.4 L1236.1,577.7 L1235.9,576.0 L1235.7,574.3 L1235.5,572.6 L1235.2,570.9 L1235.0,569.2 L1234.7,567.5 L1234.5,565.8 L1234.2,564.1 L1234.0,562.4 L1233.8,560.8 L1233.7,559.1 L1233.4,557.4 L1232.9,555.7 L1232.0,554.0 L1230.5,552.3 L1228.3,550.6Z'/>
<path d='M1061.4,664.2 L1062.7,663.5 L1063.9,662.9 L1065.2,662.3 L1066.4,661.8 L1067.7,661.6 L1068.9,661.5 L1070.2,661.5 L1071.4,661.5 L1072.7,661.6 L1073.9,661.6 L1075.2,661.6 L1076.5,661.7 L1077.7,661.8 L1079.0,662.0 L1080.2,662.3 L1081.5,662.6 L1082.7,662.9 L1084.0,663.2 L1085.2,663.4 L1086.5,663.7 L1087.7,664.0 L1089.0,664.3 L1090.3,664.6 L1091.5,664.9 L1092.8,665.2 L1094.0,665.5 L1095.3,665.9 L1096.5,666.2 L1097.8,666.6 L1099.0,667.0 L1100.3,667.3 L1101.6,667.7 L1102.8,668.1 L1104.1,668.4 L1105.3,668.8 L1106.6,669.2 L1107.8,669.5 L1109.1,669.9 L1110.3,670.3 L1111.6,670.7 L1112.8,671.1 L1114.1,671.5 L1115.4,672.0 L1116.6,672.4 L1117.9,672.8 L1119.1,673.3 L1120.4,673.7 L1121.6,674.1 L1122.9,674.6 L1124.1,675.0 L1125.4,675.4 L1126.6,675.8 L1127.9,676.3 L1129.2,676.8 L1130.4,677.3 L1131.7,677.9 L1132.9,678.6 L1134.2,679.3 L1135.4,680.0 L1136.7,680.6 L1137.9,681.3 L1139.2,682.0 L1140.4,682.7 L1141.7,683.4 L1143.0,684.1 L1144.2,684.7 L1145.5,685.4 L1146.7,686.1 L1148.0,686.9 L1149.2,687.6 L1150.5,688.4 L1151.7,689.2 L1153.0,690.0 L1154.3,690.8 L1155.5,691.6 L1156.8,692.4 L1158.0,693.2 L1159.3,694.0 L1160.5,694.8 L1161.8,695.6 L1163.0,696.3 L1164.3,697.1 L1165.5,697.9 L1166.8,698.7 L1168.1,699.5 L1169.3,700.3 L1170.6,701.1 L1171.8,701.9 L1173.1,702.7 L1174.3,703.5 L1175.6,704.3 L1176.8,705.1 L1178.1,705.9 L1179.3,706.7 L1180.6,707.5 L1181.9,708.3 L1183.1,709.1 L1184.4,709.9 L1185.6,710.7 L1186.9,711.5 L1188.1,712.3 L1189.4,713.1 L1190.6,713.9 L1191.9,714.7 L1193.1,715.5 L1194.4,716.2 L1195.7,717.0 L1196.9,717.8 L1198.2,718.6 L1199.4,719.4 L1200.7,720.2 L1201.9,721.0 L1203.2,721.9 L1204.4,722.7 L1205.7,723.6 L1207.0,724.5 L1208.2,725.4 L1209.5,726.3 L1210.7,727.2 L1212.0,728.1 L1213.2,729.0 L1214.5,729.9 L1215.7,730.8 L1217.0,731.7 L1218.2,732.7 L1219.5,733.7 L1220.8,734.9 L1222.0,736.2 L1223.3,737.5 L1224.5,738.9 L1225.8,740.3 L1227.0,741.7 L1228.3,743.1 L1229.5,744.5 L1230.8,745.8 L1232.0,747.2 L1233.3,748.6 L1234.6,750.0 L1235.8,751.4 L1237.1,752.8 L1238.3,754.2 L1239.6,755.6 L1240.8,757.0 L1242.1,758.3 L1243.3,759.7 L1244.6,761.1 L1245.8,762.5 L1247.1,763.9 L1248.4,765.4 L1249.6,767.0 L1250.9,768.5 L1252.1,770.1 L1253.4,771.7 L1254.6,773.4 L1255.9,775.0 L1257.1,776.6 L1258.4,778.2 L1259.7,779.8 L1260.9,781.4 L1262.2,783.0 L1263.4,784.6 L1264.7,786.2 L1265.9,787.8 L1267.2,789.4 L1268.4,791.0 L1269.7,792.8 L1270.9,794.7 L1272.2,796.7 L1273.5,798.8 L1274.7,800.9 L1276.0,802.9 L1277.2,805.0 L1278.5,807.1 L1279.7,809.2 L1281.0,811.3 L1282.2,813.4 L1283.5,815.5 L1284.7,817.6 L1286.0,819.7 L1286.0,819.7 L1284.7,818.5 L1283.5,817.4 L1282.2,816.3 L1281.0,815.3 L1279.7,814.3 L1278.5,813.3 L1277.2,812.3 L1276.0,811.3 L1274.7,810.3 L1273.5,809.3 L1272.2,808.3 L1270.9,807.3 L1269.7,806.3 L1268.4,805.3 L1267.2,804.3 L1265.9,803.3 L1264.7,802.3 L1263.4,801.3 L1262.2,800.3 L1260.9,799.3 L1259.7,798.2 L1258.4,797.2 L1257.1,796.2 L1255.9,795.2 L1254.6,794.1 L1253.4,793.1 L1252.1,792.1 L1250.9,791.1 L1249.6,790.0 L1248.4,789.0 L1247.1,788.0 L1245.8,787.0 L1244.6,785.9 L1243.3,784.9 L1242.1,783.9 L1240.8,782.9 L1239.6,781.8 L1238.3,780.8 L1237.1,779.8 L1235.8,778.9 L1234.6,777.9 L1233.3,777.0 L1232.0,776.2 L1230.8,775.3 L1229.5,774.4 L1228.3,773.5 L1227.0,772.7 L1225.8,771.8 L1224.5,770.9 L1223.3,770.0 L1222.0,769.2 L1220.8,768.3 L1219.5,767.4 L1218.2,766.5 L1217.0,765.7 L1215.7,764.8 L1214.5,763.9 L1213.2,763.0 L1212.0,762.2 L1210.7,761.3 L1209.5,760.4 L1208.2,759.5 L1207.0,758.6 L1205.7,757.8 L1204.4,756.9 L1203.2,756.0 L1201.9,755.1 L1200.7,754.3 L1199.4,753.4 L1198.2,752.5 L1196.9,751.6 L1195.7,750.7 L1194.4,749.9 L1193.1,749.0 L1191.9,748.1 L1190.6,747.2 L1189.4,746.4 L1188.1,745.5 L1186.9,744.6 L1185.6,743.7 L1184.4,742.8 L1183.1,742.0 L1181.9,741.1 L1180.6,740.2 L1179.3,739.3 L1178.1,738.4 L1176.8,737.6 L1175.6,736.7 L1174.3,735.8 L1173.1,734.8 L1171.8,733.9 L1170.6,733.0 L1169.3,732.1 L1168.1,731.2 L1166.8,730.2 L1165.5,729.3 L1164.3,728.4 L1163.0,727.5 L1161.8,726.6 L1160.5,725.6 L1159.3,724.7 L1158.0,723.8 L1156.8,722.9 L1155.5,722.0 L1154.3,721.0 L1153.0,720.1 L1151.7,719.2 L1150.5,718.3 L1149.2,717.4 L1148.0,716.5 L1146.7,715.8 L1145.5,715.1 L1144.2,714.4 L1143.0,713.7 L1141.7,713.1 L1140.4,712.4 L1139.2,711.7 L1137.9,711.1 L1136.7,710.4 L1135.4,709.7 L1134.2,709.0 L1132.9,708.4 L1131.7,707.7 L1130.4,707.0 L1129.2,706.4 L1127.9,705.7 L1126.6,705.0 L1125.4,704.4 L1124.1,703.7 L1122.9,703.0 L1121.6,702.4 L1120.4,701.7 L1119.1,701.0 L1117.9,700.4 L1116.6,699.7 L1115.4,699.0 L1114.1,698.4 L1112.8,697.7 L1111.6,697.1 L1110.3,696.4 L1109.1,695.7 L1107.8,695.1 L1106.6,694.4 L1105.3,693.7 L1104.1,693.1 L1102.8,692.4 L1101.6,691.7 L1100.3,691.1 L1099.0,690.4 L1097.8,689.7 L1096.5,689.1 L1095.3,688.4 L1094.0,687.7 L1092.8,687.1 L1091.5,686.4 L1090.3,685.7 L1089.0,685.0 L1087.7,684.2 L1086.5,683.5 L1085.2,682.7 L1084.0,681.9 L1082.7,681.0 L1081.5,680.2 L1080.2,679.4 L1079.0,678.6 L1077.7,677.8 L1076.5,677.0 L1075.2,676.2 L1073.9,675.3 L1072.7,674.4 L1071.4,673.5 L1070.2,672.6 L1068.9,671.6 L1067.7,670.7 L1066.4,669.7 L1065.2,668.7 L1063.9,667.4 L1062.7,665.8 L1061.4,664.2Z'/>
 </g>
</svg>
</body></html>
